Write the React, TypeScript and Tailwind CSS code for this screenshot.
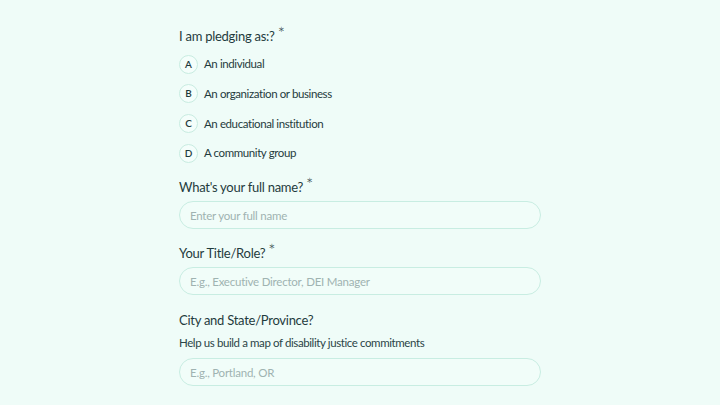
const options = [
  { key: "A", label: "An individual" },
  { key: "B", label: "An organization or business" },
  { key: "C", label: "An educational institution" },
  { key: "D", label: "A community group" },
];

function Label({ text, required }: { text: string; required?: boolean }) {
  return (
    <div className="flex h-[18px] items-center text-[13px] tracking-[-0.02em] text-[#1f3b3d]">
      <span>{text}</span>
      {required ? (
        <span className="ml-[3px] -mt-[7px] text-[17px] font-light leading-none">*</span>
      ) : null}
    </div>
  );
}

function Field({ placeholder }: { placeholder: string }) {
  return (
    <input
      placeholder={placeholder}
      className="h-[28px] w-full rounded-full border border-[#c8ede2] bg-[#f1fdf9] px-[10px] text-[11.5px] tracking-[-0.02em] text-[#1f3b3d] outline-none placeholder:text-[#9fb3b1]"
    />
  );
}

export default function App() {
  return (
    <div className="min-h-[405px] w-full bg-[#effcf8] font-['Lato',sans-serif]">
      <div className="mx-auto w-[362px] pt-[28px]">
        <Label text="I am pledging as:?" required />
        <div className="mt-[8.5px] flex flex-col gap-[10.7px]">
          {options.map((o) => (
            <div key={o.key} className="flex h-[19px] items-center gap-[6px]">
              <span className="flex h-[19px] w-[19px] items-center justify-center rounded-full border border-[#c8ece1] bg-[#f4fefb] text-[10px] font-semibold text-[#1f3b3d]">
                {o.key}
              </span>
              <span className="text-[11.5px] tracking-[-0.035em] text-[#1f3b3d]">{o.label}</span>
            </div>
          ))}
        </div>

        <div className="mt-[16.5px]">
          <Label text="What's your full name?" required />
          <div className="mt-[4px]">
            <Field placeholder="Enter your full name" />
          </div>
        </div>

        <div className="mt-[16px]">
          <Label text="Your Title/Role?" required />
          <div className="mt-[4px]">
            <Field placeholder="E.g., Executive Director, DEI Manager" />
          </div>
        </div>

        <div className="mt-[17px]">
          <Label text="City and State/Province?" />
          <p className="mt-[5px] h-[16px] text-[11.5px] leading-[16px] tracking-[-0.035em] text-[#2b4547]">
            Help us build a map of disability justice commitments
          </p>
          <div className="mt-[7px]">
            <Field placeholder="E.g., Portland, OR" />
          </div>
        </div>
      </div>
    </div>
  );
}
